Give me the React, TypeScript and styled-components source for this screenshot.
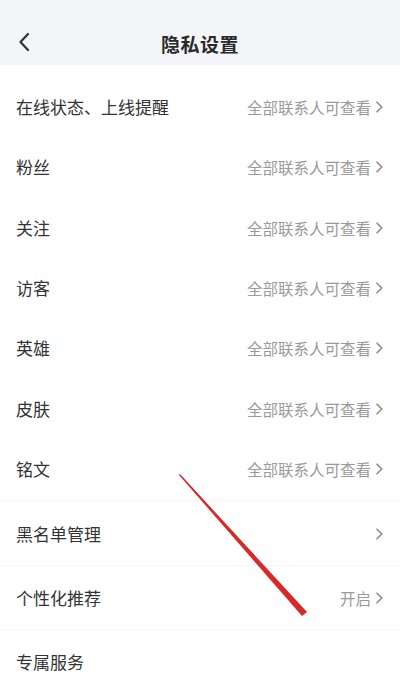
import React from "react";
import styled, { createGlobalStyle } from "styled-components";

const Global = createGlobalStyle`
  html, body { margin: 0; padding: 0; background: #ffffff; }
  body { font-family: "Noto Sans CJK SC", "Noto Sans", sans-serif; }
  * { box-sizing: border-box; }
`;

const Page = styled.div`
  position: relative;
  width: 400px;
  height: 674px;
  overflow: hidden;
  background: #ffffff;
`;

const Header = styled.header`
  height: 65px;
  background: #f4f5f9;
  display: grid;
  grid-template-columns: 60px 1fr 60px;
  align-items: center;
  padding-top: 22px;
`;

const Back = styled.div`
  display: flex;
  align-items: center;
  padding-left: 17px;
  margin-top: -4px;
  color: #333;
`;

const Title = styled.h1`
  margin: 0;
  text-align: center;
  font-size: 19px;
  line-height: 24px;
  font-weight: 700;
  color: #2a2a2a;
  letter-spacing: 0.5px;
`;

const Group = styled.section<{ $top?: number }>`
  padding-top: ${(p) => p.$top ?? 0}px;
  background: #fff;
`;

const GroupGap = styled.div`
  height: 3px;
  background: #f9f9fb;
`;

const Row = styled.div<{ $h: number; $line?: boolean }>`
  height: ${(p) => p.$h}px;
  display: flex;
  align-items: center;
  justify-content: space-between;
  padding: 0 16px 0 16px;
  border-bottom: ${(p) => (p.$line ? "1px solid #f6f6f8" : "none")};
`;

const Label = styled.span`
  font-size: 17px;
  line-height: 22px;
  color: #333;
`;

const Right = styled.span`
  display: flex;
  align-items: center;
  gap: 3px;
  font-size: 15.5px;
  line-height: 20px;
  color: #9a9a9a;
`;

const Overlay = styled.svg`
  position: absolute;
  left: 0;
  top: 0;
  pointer-events: none;
`;

const Chevron = () => (
  <svg width="10" height="14" viewBox="0 0 10 14">
    <path d="M3 2.2 L7.8 7 L3 11.8" fill="none" stroke="#8a8a8a" strokeWidth="1.6" strokeLinecap="round" strokeLinejoin="round" />
  </svg>
);

const first = ["在线状态、上线提醒", "粉丝", "关注", "访客", "英雄", "皮肤", "铭文"];

export default function App() {
  return (
    <Page>
      <Global />
      <Header>
        <Back>
          <svg width="14" height="22" viewBox="0 0 14 22">
            <path d="M11 3 L3.5 11 L11 19" fill="none" stroke="#333" strokeWidth="2.2" strokeLinecap="round" strokeLinejoin="round" />
          </svg>
        </Back>
        <Title>隐私设置</Title>
        <div />
      </Header>
      <Group $top={12}>
        {first.map((t) => (
          <Row key={t} $h={60.3}>
            <Label>{t}</Label>
            <Right>
              全部联系人可查看
              <Chevron />
            </Right>
          </Row>
        ))}
      </Group>
      <GroupGap />
      <Group>
        <Row $h={64} $line>
          <Label>黑名单管理</Label>
          <Right>
            <Chevron />
          </Right>
        </Row>
        <Row $h={64} $line>
          <Label>个性化推荐</Label>
          <Right>
            开启
            <Chevron />
          </Right>
        </Row>
        <Row $h={64}>
          <Label>专属服务</Label>
        </Row>
      </Group>
      <Overlay width="400" height="674" viewBox="0 0 400 674">
        <polygon points="179,475 180,474 307,612 302,616" fill="#d42a2a" />
      </Overlay>
    </Page>
  );
}
